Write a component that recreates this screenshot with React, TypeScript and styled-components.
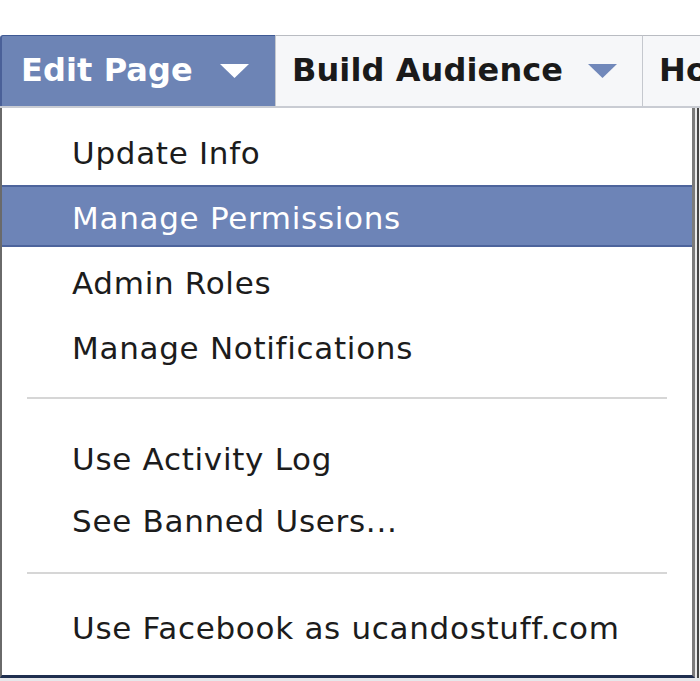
import React from "react";
import styled, { createGlobalStyle } from "styled-components";

const Global = createGlobalStyle`
  html, body { margin: 0; padding: 0; background: #ffffff; }
  body { width: 700px; height: 681px; overflow: hidden; font-family: "DejaVu Sans", Verdana, sans-serif; }
`;

const Page = styled.div`
  width: 700px;
  height: 681px;
  overflow: hidden;
  background: #ffffff;
  display: flex;
  flex-direction: column;
`;

const TopSpace = styled.div`
  height: 35px;
  flex: none;
`;

const TabBar = styled.div`
  display: flex;
  height: 71px;
  flex: none;
  border-bottom: 2px solid #c9ccd3;
  overflow: hidden;
`;

const Tab = styled.div<{ $active?: boolean; $w: number; $pl: number }>`
  box-sizing: border-box;
  flex: none;
  width: ${(p) => p.$w}px;
  height: 71px;
  display: flex;
  align-items: center;
  gap: ${(p) => (p.$active ? 27 : 25)}px;
  padding-left: ${(p) => p.$pl}px;
  padding-bottom: 2px;
  overflow: hidden;
  font-family: "DejaVu Sans", Verdana, sans-serif;
  font-weight: bold;
  font-size: 32px;
  letter-spacing: 0.1px;
  white-space: nowrap;
  color: ${(p) => (p.$active ? "#ffffff" : "#1a1a1a")};
  background: ${(p) => (p.$active ? "#6d84b5" : "#f6f7f9")};
  border-top: 1px solid ${(p) => (p.$active ? "#3f5a94" : "#b9bcc2")};
  border-left: ${(p) => (p.$active ? "2px solid #4a6098" : "1px solid #c5c8ce")};
  border-radius: ${(p) => (p.$active ? "3px 0 0 0" : "0")};
`;

const Arrow = styled.svg`
  flex: none;
  display: block;
  margin-top: 2px;
`;

const Menu = styled.div`
  box-sizing: border-box;
  width: 695px;
  flex: none;
  display: flex;
  flex-direction: column;
  padding: 12px 0 18px;
  background: #ffffff;
  border-left: 2px solid #6a6a6a;
  border-right: 3px solid #7b7b7b;
  border-bottom: 3px solid #1f2f4f;
`;

const Group = styled.div<{ $gap: number }>`
  display: flex;
  flex-direction: column;
  gap: ${(p) => p.$gap}px;
`;

const Item = styled.div<{ $selected?: boolean }>`
  box-sizing: border-box;
  height: 62px;
  display: flex;
  align-items: center;
  padding: 3px 0 0 70px;
  font-family: "DejaVu Sans", Verdana, sans-serif;
  font-size: 31px;
  letter-spacing: 0.7px;
  white-space: nowrap;
  color: ${(p) => (p.$selected ? "#ffffff" : "#1c1c1c")};
  background: ${(p) => (p.$selected ? "#6d84b7" : "transparent")};
  border-top: 2px solid ${(p) => (p.$selected ? "#4d649c" : "transparent")};
  border-bottom: 2px solid ${(p) => (p.$selected ? "#4d649c" : "transparent")};
`;

const Separator = styled.div<{ $mt: number; $mb: number }>`
  height: 2px;
  margin: ${(p) => p.$mt}px 25px ${(p) => p.$mb}px 25px;
  background: #d6d6d6;
`;

const Body = styled.div`
  display: flex;
  flex: none;
`;

const Behind = styled.div`
  flex: 1;
  background: linear-gradient(to right, #e9e9e9 0 2px, #444 2px 4px, #f0f0f0 4px);
`;

const Below = styled.div`
  flex: 1;
  background: #e6e7ea;
`;

const DownArrow = ({ color }: { color: string }) => (
  <Arrow width="29" height="14" viewBox="0 0 29 14">
    <polygon points="0,0 29,0 14.5,14" fill={color} />
  </Arrow>
);

export default function App() {
  return (
    <>
      <Global />
      <Page>
        <TopSpace />
        <TabBar>
          <Tab $active $w={275} $pl={19}>
            <span>Edit Page</span>
            <DownArrow color="#ffffff" />
          </Tab>
          <Tab $w={367} $pl={16}>
            <span>Build Audience</span>
            <DownArrow color="#7188ba" />
          </Tab>
          <Tab $w={60} $pl={16}>
            <span>Home</span>
          </Tab>
        </TabBar>
        <Body>
          <Menu>
            <Group $gap={3}>
              <Item>Update Info</Item>
              <Item $selected>Manage Permissions</Item>
              <Item>Admin Roles</Item>
              <Item>Manage Notifications</Item>
            </Group>
            <Separator $mt={20} $mb={27} />
            <Group $gap={0}>
              <Item>Use Activity Log</Item>
              <Item>See Banned Users...</Item>
            </Group>
            <Separator $mt={22} $mb={21} />
            <Group $gap={0}>
              <Item>Use Facebook as ucandostuff.com</Item>
            </Group>
          </Menu>
          <Behind />
        </Body>
        <Below />
      </Page>
    </>
  );
}
